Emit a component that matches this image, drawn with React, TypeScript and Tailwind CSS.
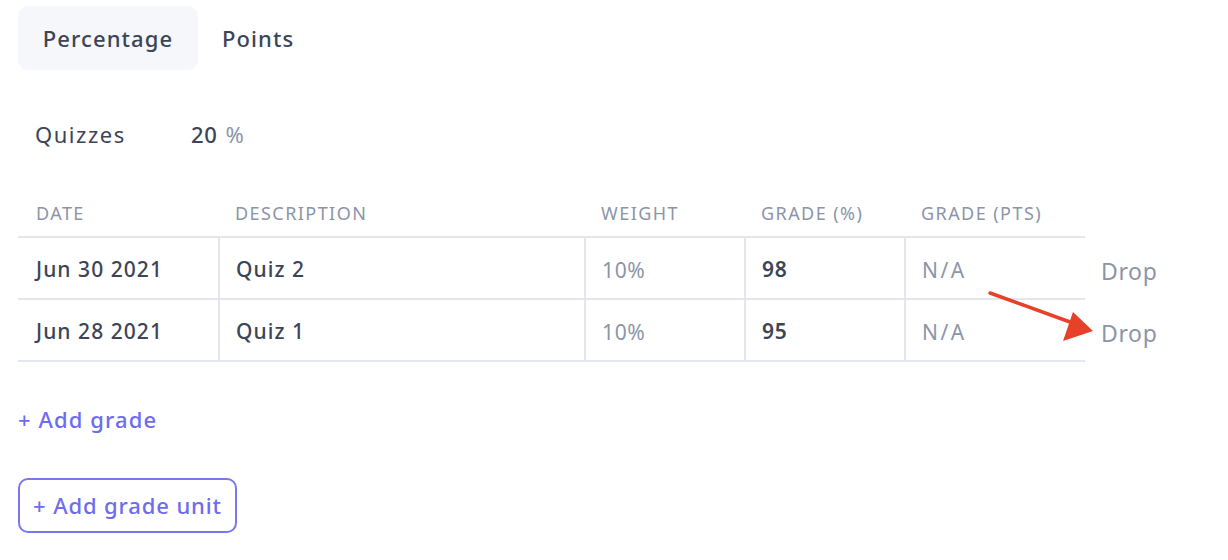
const ROWS = [
  { date: 'Jun 30 2021', desc: 'Quiz 2', weight: '10%', grade: '98', pts: 'N/A' },
  { date: 'Jun 28 2021', desc: 'Quiz 1', weight: '10%', grade: '95', pts: 'N/A' },
];

const COLS = [
  { label: 'Date', w: 'w-[201px]', pl: 'pl-[18px]' },
  { label: 'Description', w: 'w-[366px]', pl: 'pl-[16px]' },
  { label: 'Weight', w: 'w-[160px]', pl: 'pl-[16px]' },
  { label: 'Grade (%)', w: 'w-[160px]', pl: 'pl-[16px]' },
  { label: 'Grade (pts)', w: 'w-[180px]', pl: 'pl-[16px]' },
];

export default function App() {
  return (
    <div className="relative w-[1228px] h-[560px] bg-white text-[#3b4557] font-['Noto_Sans','Open_Sans',sans-serif] tracking-[0.04em]">
      {/* Tabs */}
      <div className="flex items-center pt-[6px] pl-[18px]">
        <button className="w-[180px] h-[64px] rounded-[10px] bg-[#f5f7fa] text-[22px] font-medium text-[#3b4557] tracking-[0.05em]">
          Percentage
        </button>
        <button className="ml-[24px] text-[22px] font-medium text-[#3b4557] tracking-[0.05em]">Points</button>
      </div>

      {/* Unit */}
      <div className="flex items-baseline pl-[35px] mt-[49px] text-[22px] leading-[30px]">
        <span className="w-[156px] tracking-[0.07em]">Quizzes</span>
        <span className="font-medium">20</span>
        <span className="ml-[8px] text-[#8b95a7]">%</span>
      </div>

      {/* Table */}
      <table className="ml-[18px] mt-[51px] border-collapse">
        <thead>
          <tr>
            {COLS.map((c) => (
              <th
                key={c.label}
                className={`${c.w} ${c.pl} pb-[10px] text-left text-[18px] leading-[26px] font-normal uppercase tracking-[0.08em] text-[#8b95a7] border-b-2 border-[#e3e7ed]`}
              >
                {c.label}
              </th>
            ))}
            <th className="w-[100px]" />
          </tr>
        </thead>
        <tbody>
          {ROWS.map((r) => (
            <tr key={r.desc} className="h-[62px]">
              <td className="pl-[18px] pt-[4px] text-[21px] font-medium tracking-[0.05em] border-b-2 border-[#e3e7ed]">{r.date}</td>
              <td className="pl-[16px] pt-[4px] text-[21px] font-medium tracking-[0.05em] border-b-2 border-l-2 border-[#e3e7ed]">{r.desc}</td>
              <td className="pl-[16px] pt-[6px] text-[21px] text-[#8b95a7] border-b-2 border-l-2 border-[#e3e7ed]">{r.weight}</td>
              <td className="pl-[16px] pt-[4px] text-[21px] font-semibold border-b-2 border-l-2 border-[#e3e7ed]">{r.grade}</td>
              <td className="pl-[16px] pt-[6px] text-[21px] tracking-[0.12em] text-[#8b95a7] border-b-2 border-l-2 border-[#e3e7ed]">{r.pts}</td>
              <td className="pl-[16px] pt-[6px] text-[23px] text-[#8b95a7]">Drop</td>
            </tr>
          ))}
        </tbody>
      </table>

      {/* Actions */}
      <button className="block ml-[18px] mt-[42px] text-[22px] leading-[30px] font-medium tracking-[0.05em] text-[#6d6cf0]">+ Add grade</button>
      <button className="block ml-[18px] mt-[44px] w-[219px] h-[55px] rounded-[10px] border-2 border-[#7877f2] text-[22px] font-medium tracking-[0.04em] text-[#6d6cf0]">
        + Add grade unit
      </button>

      {/* Annotation arrow */}
      <svg className="absolute left-0 top-0 pointer-events-none" width="1228" height="560">
        <line x1="990" y1="293" x2="1070" y2="322" stroke="#e8412a" strokeWidth="3.5" strokeLinecap="round" />
        <polygon points="1093,331 1063,341 1073,312" fill="#e8412a" />
      </svg>
    </div>
  );
}
